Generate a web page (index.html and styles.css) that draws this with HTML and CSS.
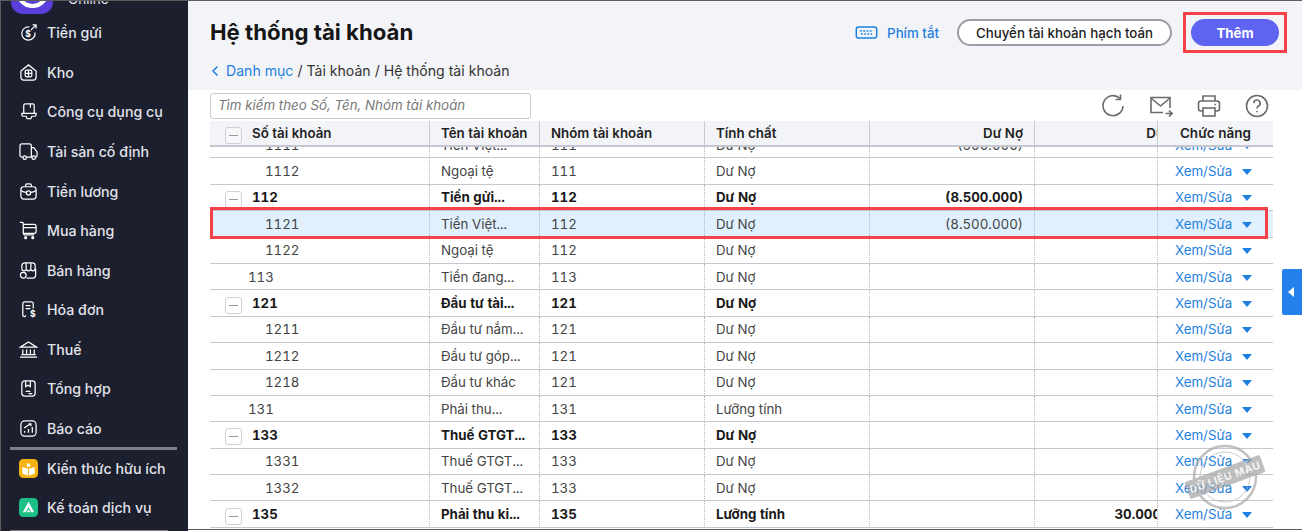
FILE: index.html
```html
<!DOCTYPE html>
<html lang="en">
<head>
    <meta charset="UTF-8">
    <meta name="viewport" content="width=device-width, initial-scale=1.0">
    <title>Hệ thống tài khoản</title>
    <link rel="stylesheet" href="styles.css">
</head>
<body>
<div class="window">
    <aside class="sidebar">
        <div class="brand">
            <div class="brand-logo"><span class="brand-ring"></span></div>
            <span class="brand-name">Online</span>
        </div>
        <nav class="nav">
            <a class="nav-item">
                <svg class="nav-icon" viewBox="0 0 20 20"><path d="M11 4.200A7 7 0 1 0 16.800 10"/><path d="M12.500 7.500L18 2M14.300 2H18v3.700"/><text x="9.500" y="14.500" class="icon-glyph">$</text></svg>
                <span>Tiền gửi</span>
            </a>
            <a class="nav-item">
                <svg class="nav-icon" viewBox="0 0 20 20"><path d="M2 8.500L10 2l8 6.500V15a3 3 0 0 1-3 3H5a3 3 0 0 1-3-3z"/><rect x="6.500" y="7.500" width="7" height="7" rx="1.500"/><path d="M10 7.500v7M6.500 11h7"/></svg>
                <span>Kho</span>
            </a>
            <a class="nav-item">
                <svg class="nav-icon" viewBox="0 0 20 20"><path d="M5 12V3.500A1.500 1.500 0 0 1 6.500 2h8A1.500 1.500 0 0 1 16 3.500V12"/><path d="M3 12h15v1.500a1.500 1.500 0 0 1-1.500 1.500h-3l-1 2.500h-4l-1-2.500h-3A1.500 1.500 0 0 1 3 13.500z"/><path d="M12 2v4"/></svg>
                <span>Công cụ dụng cụ</span>
            </a>
            <a class="nav-item">
                <svg class="nav-icon" viewBox="0 0 20 20"><path d="M4 16H3a2 2 0 0 1-2-2V4a2 2 0 0 1 2-2h8a2 2 0 0 1 2 2v12H8"/><path d="M13 6h2.500l3.500 4.500V14a2 2 0 0 1-2 2M13 16h1"/><circle cx="6" cy="16.500" r="1.800"/><circle cx="15.500" cy="16.500" r="1.800"/></svg>
                <span>Tài sản cố định</span>
            </a>
            <a class="nav-item">
                <svg class="nav-icon" viewBox="0 0 20 20"><rect x="2" y="5" width="16" height="13" rx="3"/><path d="M7 5V3.500A1.500 1.500 0 0 1 8.500 2h3A1.500 1.500 0 0 1 13 3.500V5"/><path d="M2 9c2 1.500 4 2 6 2M18 9c-2 1.500-4 2-6 2"/><circle cx="10" cy="11.500" r="2.200"/></svg>
                <span>Tiền lương</span>
            </a>
            <a class="nav-item">
                <svg class="nav-icon" viewBox="0 0 20 20"><path d="M1 1.500h2.500a1 1 0 0 1 1 1V13a1.500 1.500 0 0 0 1.500 1.500h10"/><path d="M4.500 3.500H16a2 2 0 0 1 2 2V11a2 2 0 0 1-2 2H4.500"/><path d="M5 7h13"/><circle cx="7" cy="17.500" r="1" class="icon-fill"/><circle cx="14.500" cy="17.500" r="1" class="icon-fill"/></svg>
                <span>Mua hàng</span>
            </a>
            <a class="nav-item">
                <svg class="nav-icon" viewBox="0 0 20 20"><path d="M3 8V5a3 3 0 0 1 3-3h8a3 3 0 0 1 3 3v3"/><path d="M3 8a2.300 2.300 0 0 0 4.700 0 2.300 2.300 0 0 0 4.600 0A2.300 2.300 0 0 0 17 8"/><path d="M7.500 2v6M12.500 2v6M17.500 8v7a3 3 0 0 1-3 3H8"/><circle cx="4.500" cy="15" r="3"/></svg>
                <span>Bán hàng</span>
            </a>
            <a class="nav-item">
                <svg class="nav-icon" viewBox="0 0 20 20"><path d="M15 9V4a2 2 0 0 0-2-2H6a2 2 0 0 0-2 2v12c0 1 .7 1.500 1.500 1.500S7 17 7 16"/><path d="M7 6h5M7 9h5"/><text x="14.500" y="18" class="icon-glyph">$</text></svg>
                <span>Hóa đơn</span>
            </a>
            <a class="nav-item">
                <svg class="nav-icon" viewBox="0 0 20 20"><path d="M1.500 7.500L10 2l8.500 5.500z"/><path d="M4 10v5M8 10v5M12 10v5M16 10v5M2.500 15.500h15M1 18h18"/></svg>
                <span>Thuế</span>
            </a>
            <a class="nav-item">
                <svg class="nav-icon" viewBox="0 0 20 20"><rect x="3" y="2" width="14" height="16" rx="3"/><path d="M7 2v6l2.500-1.500L12 8V2M7 13h5M10 15.500h4"/></svg>
                <span>Tổng hợp</span>
            </a>
            <a class="nav-item">
                <svg class="nav-icon" viewBox="0 0 20 20"><rect x="2" y="2" width="16" height="16" rx="4"/><path d="M6 14.500v-2M10 14.500v-4M14 14.500v-6M5.500 9.500L12 5M10 5h2.500v2.500"/></svg>
                <span>Báo cáo</span>
            </a>
            <hr class="nav-divider">
            <a class="nav-item">
                <svg class="nav-badge" viewBox="0 0 20 20"><rect width="20" height="20" rx="4.500" fill="#f5b312"/><path d="M3.500 8.500l6.500 2 6.500-2v7L10 17.500l-6.500-2z" fill="#fff"/><path d="M10 10.500v7" stroke="#f5b312" stroke-width="1"/><circle cx="10" cy="6.500" r="2" fill="#fff"/></svg>
                <span>Kiến thức hữu ích</span>
            </a>
            <a class="nav-item">
                <svg class="nav-badge" viewBox="0 0 20 20"><rect width="20" height="20" rx="4.500" fill="#1cbf86"/><path d="M10 4l6 11h-3.200L10 9.500 7.200 15H4z" fill="#fff"/><path d="M10 12l1.800 3H8.200z" fill="#fff"/></svg>
                <span>Kế toán dịch vụ</span>
            </a>
            <hr class="nav-divider nav-divider-short">
        </nav>
    </aside>

    <main class="main">
        <header class="page-header">
            <div class="title-row">
                <h1>Hệ thống tài khoản</h1>
                <a class="shortcut">
                    <svg class="shortcut-icon" viewBox="0 0 24 14"><rect x="1" y="1" width="22" height="12" rx="2.500"/><path d="M5 5.500h14M6 8.500h12" stroke-dasharray="2 1.500"/></svg>
                    Phím tắt
                </a>
                <button class="btn-outline">Chuyển tài khoản hạch toán</button>
                <div class="mark-box"><button class="btn-primary">Thêm</button></div>
            </div>
            <div class="crumbs">
                <svg class="crumb-back" viewBox="0 0 8 12"><path d="M6.500 1.500L2 6l4.500 4.500"/></svg>
                <a>Danh mục</a> / Tài khoản / Hệ thống tài khoản
            </div>
        </header>

        <div class="toolbar">
            <div class="search">Tìm kiếm theo Số, Tên, Nhóm tài khoản</div>
            <div class="tools">
                <svg viewBox="0 0 24 24"><path d="M19 4.500A10 10 0 1 0 22 12"/><path d="M19.500 0.500v5h-5"/></svg>
                <svg viewBox="0 0 24 24"><path d="M21 14V3.500H2v15h12"/><path d="M2 4l9.500 8L21 4M16.500 19.500h6.500M20 16.500l3 3-3 3"/></svg>
                <svg viewBox="0 0 24 24"><path d="M6 7V2h12v5"/><rect x="1.500" y="7" width="21" height="10" rx="2.500"/><rect x="6" y="14" width="12" height="8" fill="#fff"/><path d="M17.500 10.500h1.500"/></svg>
                <svg viewBox="0 0 24 24"><circle cx="12" cy="12" r="10.500"/><path d="M8.800 9.200A3.200 3.200 0 1 1 13.500 12c-1 .6-1.500 1.200-1.500 2.500"/><path d="M12 17v1.200"/></svg>
            </div>
        </div>

        <div class="grid-wrap">
            <table class="grid grid-head">
                <colgroup><col class="c1"><col class="c2"><col class="c3"><col class="c4"><col class="c5"><col class="c6"><col class="c7"></colgroup>
                <tr>
                    <th class="first"><span class="toggle"></span>Số tài khoản</th>
                    <th>Tên tài khoản</th>
                    <th>Nhóm tài khoản</th>
                    <th>Tính chất</th>
                    <th class="num">Dư Nợ</th>
                    <th class="num clip"><span>Dư Có</span></th>
                    <th class="func">Chức năng</th>
                </tr>
            </table>
            <div class="grid-body">
                <table class="grid">
                    <colgroup><col class="c1"><col class="c2"><col class="c3"><col class="c4"><col class="c5"><col class="c6"><col class="c7"></colgroup>
                    <tr><td class="lv2">1111</td><td>Tiền Việt...</td><td>111</td><td>Dư Nợ</td><td class="num">(500.000)</td><td class="num clip"></td><td class="func"><a>Xem/Sửa</a><i></i></td></tr>
                    <tr><td class="lv2">1112</td><td>Ngoại tệ</td><td>111</td><td>Dư Nợ</td><td class="num"></td><td class="num clip"></td><td class="func"><a>Xem/Sửa</a><i></i></td></tr>
                    <tr class="parent"><td class="first"><span class="toggle"></span>112</td><td>Tiền gửi...</td><td>112</td><td>Dư Nợ</td><td class="num">(8.500.000)</td><td class="num clip"></td><td class="func"><a>Xem/Sửa</a><i></i></td></tr>
                    <tr class="selected"><td class="lv2">1121</td><td>Tiền Việt...</td><td>112</td><td>Dư Nợ</td><td class="num">(8.500.000)</td><td class="num clip"></td><td class="func"><a>Xem/Sửa</a><i></i></td></tr>
                    <tr><td class="lv2">1122</td><td>Ngoại tệ</td><td>112</td><td>Dư Nợ</td><td class="num"></td><td class="num clip"></td><td class="func"><a>Xem/Sửa</a><i></i></td></tr>
                    <tr><td class="lv1">113</td><td>Tiền đang...</td><td>113</td><td>Dư Nợ</td><td class="num"></td><td class="num clip"></td><td class="func"><a>Xem/Sửa</a><i></i></td></tr>
                    <tr class="parent"><td class="first"><span class="toggle"></span>121</td><td>Đầu tư tài...</td><td>121</td><td>Dư Nợ</td><td class="num"></td><td class="num clip"></td><td class="func"><a>Xem/Sửa</a><i></i></td></tr>
                    <tr><td class="lv2">1211</td><td>Đầu tư nắm...</td><td>121</td><td>Dư Nợ</td><td class="num"></td><td class="num clip"></td><td class="func"><a>Xem/Sửa</a><i></i></td></tr>
                    <tr><td class="lv2">1212</td><td>Đầu tư góp...</td><td>121</td><td>Dư Nợ</td><td class="num"></td><td class="num clip"></td><td class="func"><a>Xem/Sửa</a><i></i></td></tr>
                    <tr><td class="lv2">1218</td><td>Đầu tư khác</td><td>121</td><td>Dư Nợ</td><td class="num"></td><td class="num clip"></td><td class="func"><a>Xem/Sửa</a><i></i></td></tr>
                    <tr><td class="lv1">131</td><td>Phải thu...</td><td>131</td><td>Lưỡng tính</td><td class="num"></td><td class="num clip"></td><td class="func"><a>Xem/Sửa</a><i></i></td></tr>
                    <tr class="parent"><td class="first"><span class="toggle"></span>133</td><td>Thuế GTGT...</td><td>133</td><td>Dư Nợ</td><td class="num"></td><td class="num clip"></td><td class="func"><a>Xem/Sửa</a><i></i></td></tr>
                    <tr><td class="lv2">1331</td><td>Thuế GTGT...</td><td>133</td><td>Dư Nợ</td><td class="num"></td><td class="num clip"></td><td class="func"><a>Xem/Sửa</a><i></i></td></tr>
                    <tr><td class="lv2">1332</td><td>Thuế GTGT...</td><td>133</td><td>Dư Nợ</td><td class="num"></td><td class="num clip"></td><td class="func"><a>Xem/Sửa</a><i></i></td></tr>
                    <tr class="parent"><td class="first"><span class="toggle"></span>135</td><td>Phải thu ki...</td><td>135</td><td>Lưỡng tính</td><td class="num"></td><td class="num clip"><span>30.000</span></td><td class="func"><a>Xem/Sửa</a><i></i></td></tr>
                </table>
                <div class="row-mark"></div>
                <svg class="stamp" viewBox="0 0 84 72">
                    <circle cx="42" cy="36" r="31" class="stamp-ring"/>
                    <circle cx="42" cy="36" r="25" class="stamp-ring-thin"/>
                    <g transform="rotate(-20 42 36)">
                        <rect x="2" y="27" width="80" height="18" rx="1.500" class="stamp-band"/>
                        <text x="42" y="40" class="stamp-text">DỮ LIỆU MẪU</text>
                    </g>
                </svg>
            </div>
        </div>
        <div class="scroll-thumb"></div>
        <a class="side-tab"></a>
    </main>
</div>
</body>
</html>
```

FILE: styles.css
```css
* {
    margin: 0;
    padding: 0;
    box-sizing: border-box;
}
html, body {
    height: 100%;
    overflow: hidden;
}
body {
    font-family: Inter, "Noto Sans", sans-serif;
    font-size: 13.3px;
    color: #333;
    background-color: #fff;
}
.window {
    display: flex;
    height: 531px;
    border-top: 1px solid #5c5c5c;
    border-left: 1px solid #5c5c5c;
}

/* sidebar */
.sidebar {
    width: 187px;
    flex-shrink: 0;
    background-color: #1c1f2e;
    color: #e2e3ea;
}
.brand {
    display: flex;
    align-items: flex-end;
    height: 13px;
    padding-left: 10px;
    overflow: hidden;
}
.brand-logo {
    display: flex;
    justify-content: center;
    flex-shrink: 0;
    width: 42px;
    height: 42px;
    padding-top: 3px;
    border-radius: 12px;
    background-color: #5b3fdc;
}
.brand-ring {
    width: 33px;
    height: 33px;
    border: 4px solid #fff;
    border-radius: 50%;
}
.brand-name {
    flex-shrink: 0;
    margin: 0 0 6px 15px;
    font-size: 13.500px;
    line-height: 17px;
}
.nav {
    display: flex;
    flex-direction: column;
    margin-top: -1px;
}
.nav-item {
    display: flex;
    align-items: center;
    gap: 9px;
    height: 39.58px;
    padding-left: 18px;
    font-size: 14.200px;
    font-weight: 500;
    white-space: nowrap;
}
.nav-icon {
    width: 19px;
    height: 19px;
    flex-shrink: 0;
    fill: none;
    stroke: #fff;
    stroke-width: 1.300;
}
.nav-icon .icon-fill {
    fill: #fff;
}
.icon-glyph {
    fill: #fff;
    stroke: none;
    font-size: 9px;
    font-weight: 700;
    text-anchor: middle;
}
.nav-badge {
    width: 19px;
    height: 19px;
    flex-shrink: 0;
}
.nav-divider {
    width: 167px;
    height: 3px;
    margin: -1px 0 -2px 9px;
    border: none;
    background-color: #7c7e8a;
}
.nav-divider-short {
    width: 158px;
    height: 2px;
    margin-top: 2px;
}

/* page header */
.main {
    position: relative;
    flex: 1;
    min-width: 0;
    height: 529px;
    border-bottom: 1px solid #5c5c5c;
}
.page-header {
    height: 89px;
    padding: 11px 15px 0 22px;
    background-color: #f3f4f8;
}
.title-row {
    display: flex;
    align-items: center;
}
.title-row h1 {
    flex: 1;
    margin-top: -2px;
    font-size: 22.200px;
    font-weight: 700;
    color: #151515;
}
.shortcut {
    display: flex;
    align-items: center;
    gap: 9px;
    margin-right: 18px;
    font-size: 13.300px;
    font-weight: 500;
    color: #1f7fe0;
}
.shortcut-icon {
    width: 23px;
    height: 13px;
    fill: none;
    stroke: #1f7fe0;
    stroke-width: 1.600;
}
.btn-outline,
.btn-primary {
    height: 27px;
    border-radius: 14px;
    font-family: inherit;
    font-size: 13.300px;
    font-weight: 500;
}
.btn-outline {
    width: 215px;
    margin-right: 11px;
    border: 2px solid #9a9ca6;
    background-color: #fff;
    color: #222;
}
.mark-box {
    display: flex;
    align-items: center;
    justify-content: center;
    width: 104px;
    height: 41px;
    border: 3px solid #f44248;
}
.btn-primary {
    width: 88px;
    border: none;
    background-color: #5f63f2;
    color: #fff;
    font-weight: 700;
}
.crumbs {
    margin-top: 9px;
    font-size: 14.100px;
    line-height: 18px;
    color: #333;
    white-space: nowrap;
}
.crumbs a {
    color: #1f7fe0;
}
.crumb-back {
    width: 8px;
    height: 12px;
    margin: 0 3px 0 1px;
    vertical-align: -1px;
    fill: none;
    stroke: #1f7fe0;
    stroke-width: 1.500;
}

/* toolbar */
.toolbar {
    display: flex;
    align-items: center;
    justify-content: space-between;
    height: 31px;
    padding: 0 33px 0 22px;
}
.search {
    width: 321px;
    height: 26px;
    padding-left: 7px;
    border: 1px solid #c9cbd1;
    border-radius: 3px;
    font-size: 13.300px;
    line-height: 22px;
    font-style: italic;
    color: #777;
}
.tools {
    display: flex;
    gap: 24px;
}
.tools svg {
    width: 24px;
    height: 24px;
    fill: none;
    stroke: #6b6b6b;
    stroke-width: 1.600;
}

/* grid */
.grid-wrap {
    width: 1063px;
    margin-left: 22px;
}
.grid {
    width: 1063px;
    border-collapse: separate;
    border-spacing: 0;
    table-layout: fixed;
    font-variant-numeric: tabular-nums;
}
.c1 { width: 220px; }
.c2 { width: 110px; }
.c3 { width: 165px; }
.c4 { width: 165px; }
.c5 { width: 165px; }
.c6 { width: 122px; }
.c7 { width: 116px; }
.grid th {
    height: 26px;
    padding: 0 11px;
    background-color: #f3f4f8;
    border-right: 1px solid #c8cad2;
    border-bottom: 2px solid #c5c7cf;
    font-size: 13.300px;
    font-weight: 600;
    color: #222;
    text-align: left;
    white-space: nowrap;
}
.grid td {
    height: 26.4px;
    padding: 0 11px;
    border-bottom: 1px solid #c6c7d0;
    border-right: 1px dotted #b5b5b5;
    font-size: 13.300px;
    color: #444;
    white-space: nowrap;
}
.grid th.first,
.grid td.first {
    padding-left: 15px;
}
.grid td.lv1 {
    padding-left: 38px;
}
.grid td.lv2 {
    padding-left: 55px;
}
.grid .num {
    text-align: right;
}
.grid .clip {
    overflow: hidden;
    border-right: none;
    text-align: left;
}
.grid .clip span {
    display: block;
    width: 115px;
    text-align: right;
}
.grid th.clip span {
    width: 140px;
}
.grid th.func {
    padding: 0;
    border-left: 1px solid #c8cad2;
    border-right: none;
    text-align: center;
    font-size: 13.500px;
}
.grid td.func {
    padding-left: 17px;
    border-left: 1px dotted #b5b5b5;
    border-right: none;
}
.func a {
    color: #1f7fe0;
}
.func i {
    display: inline-block;
    width: 0;
    height: 0;
    margin-left: 10px;
    border-left: 5px solid transparent;
    border-right: 5px solid transparent;
    border-top: 6px solid #1f7fe0;
    vertical-align: 1px;
}
.grid .parent td {
    font-weight: 700;
    color: #1a1a1a;
}
.grid .parent td.func {
    font-weight: 400;
}
.grid .selected td {
    background-color: #e0f0fd;
}
.toggle {
    display: inline-block;
    width: 17px;
    height: 17px;
    margin: -3px 10px -3px 0;
    border: 1px solid #cfd0d5;
    border-radius: 3px;
    background: linear-gradient(#9a9a9a, #9a9a9a) center / 9px 1px no-repeat #fff;
    vertical-align: -2.500px;
}
.grid-head .toggle {
    background-color: #f8f8fa;
}
.grid-body {
    position: relative;
    height: 381px;
    overflow: hidden;
}
.grid-body .grid {
    margin-top: -15px;
}
.row-mark {
    position: absolute;
    top: 60px;
    left: 0;
    width: 1058px;
    height: 32px;
    border: 3px solid #f44248;
}
.stamp {
    position: absolute;
    top: 294px;
    left: 973px;
    width: 84px;
    height: 72px;
    opacity: .7;
}
.stamp-ring {
    fill: none;
    stroke: #a8a8a8;
    stroke-width: 2.500;
}
.stamp-ring-thin {
    fill: none;
    stroke: #b8b8b8;
    stroke-width: 1;
}
.stamp-band {
    fill: #a3a3a3;
}
.stamp-text {
    fill: #f2f2f2;
    font-size: 10.500px;
    font-weight: 700;
    text-anchor: middle;
    letter-spacing: .6px;
}
.scroll-thumb {
    position: absolute;
    top: 305px;
    left: 1272px;
    width: 6px;
    height: 45px;
    border-radius: 3px;
    background-color: #b6b8bd;
}
.side-tab {
    position: absolute;
    top: 268px;
    right: 0;
    width: 20px;
    height: 46px;
    border-radius: 2px 0 0 2px;
    background-color: #2680eb;
}
.side-tab::after {
    content: "";
    position: absolute;
    top: 18px;
    left: 6px;
    border-top: 5px solid transparent;
    border-bottom: 5px solid transparent;
    border-right: 6px solid #fff;
}
```
